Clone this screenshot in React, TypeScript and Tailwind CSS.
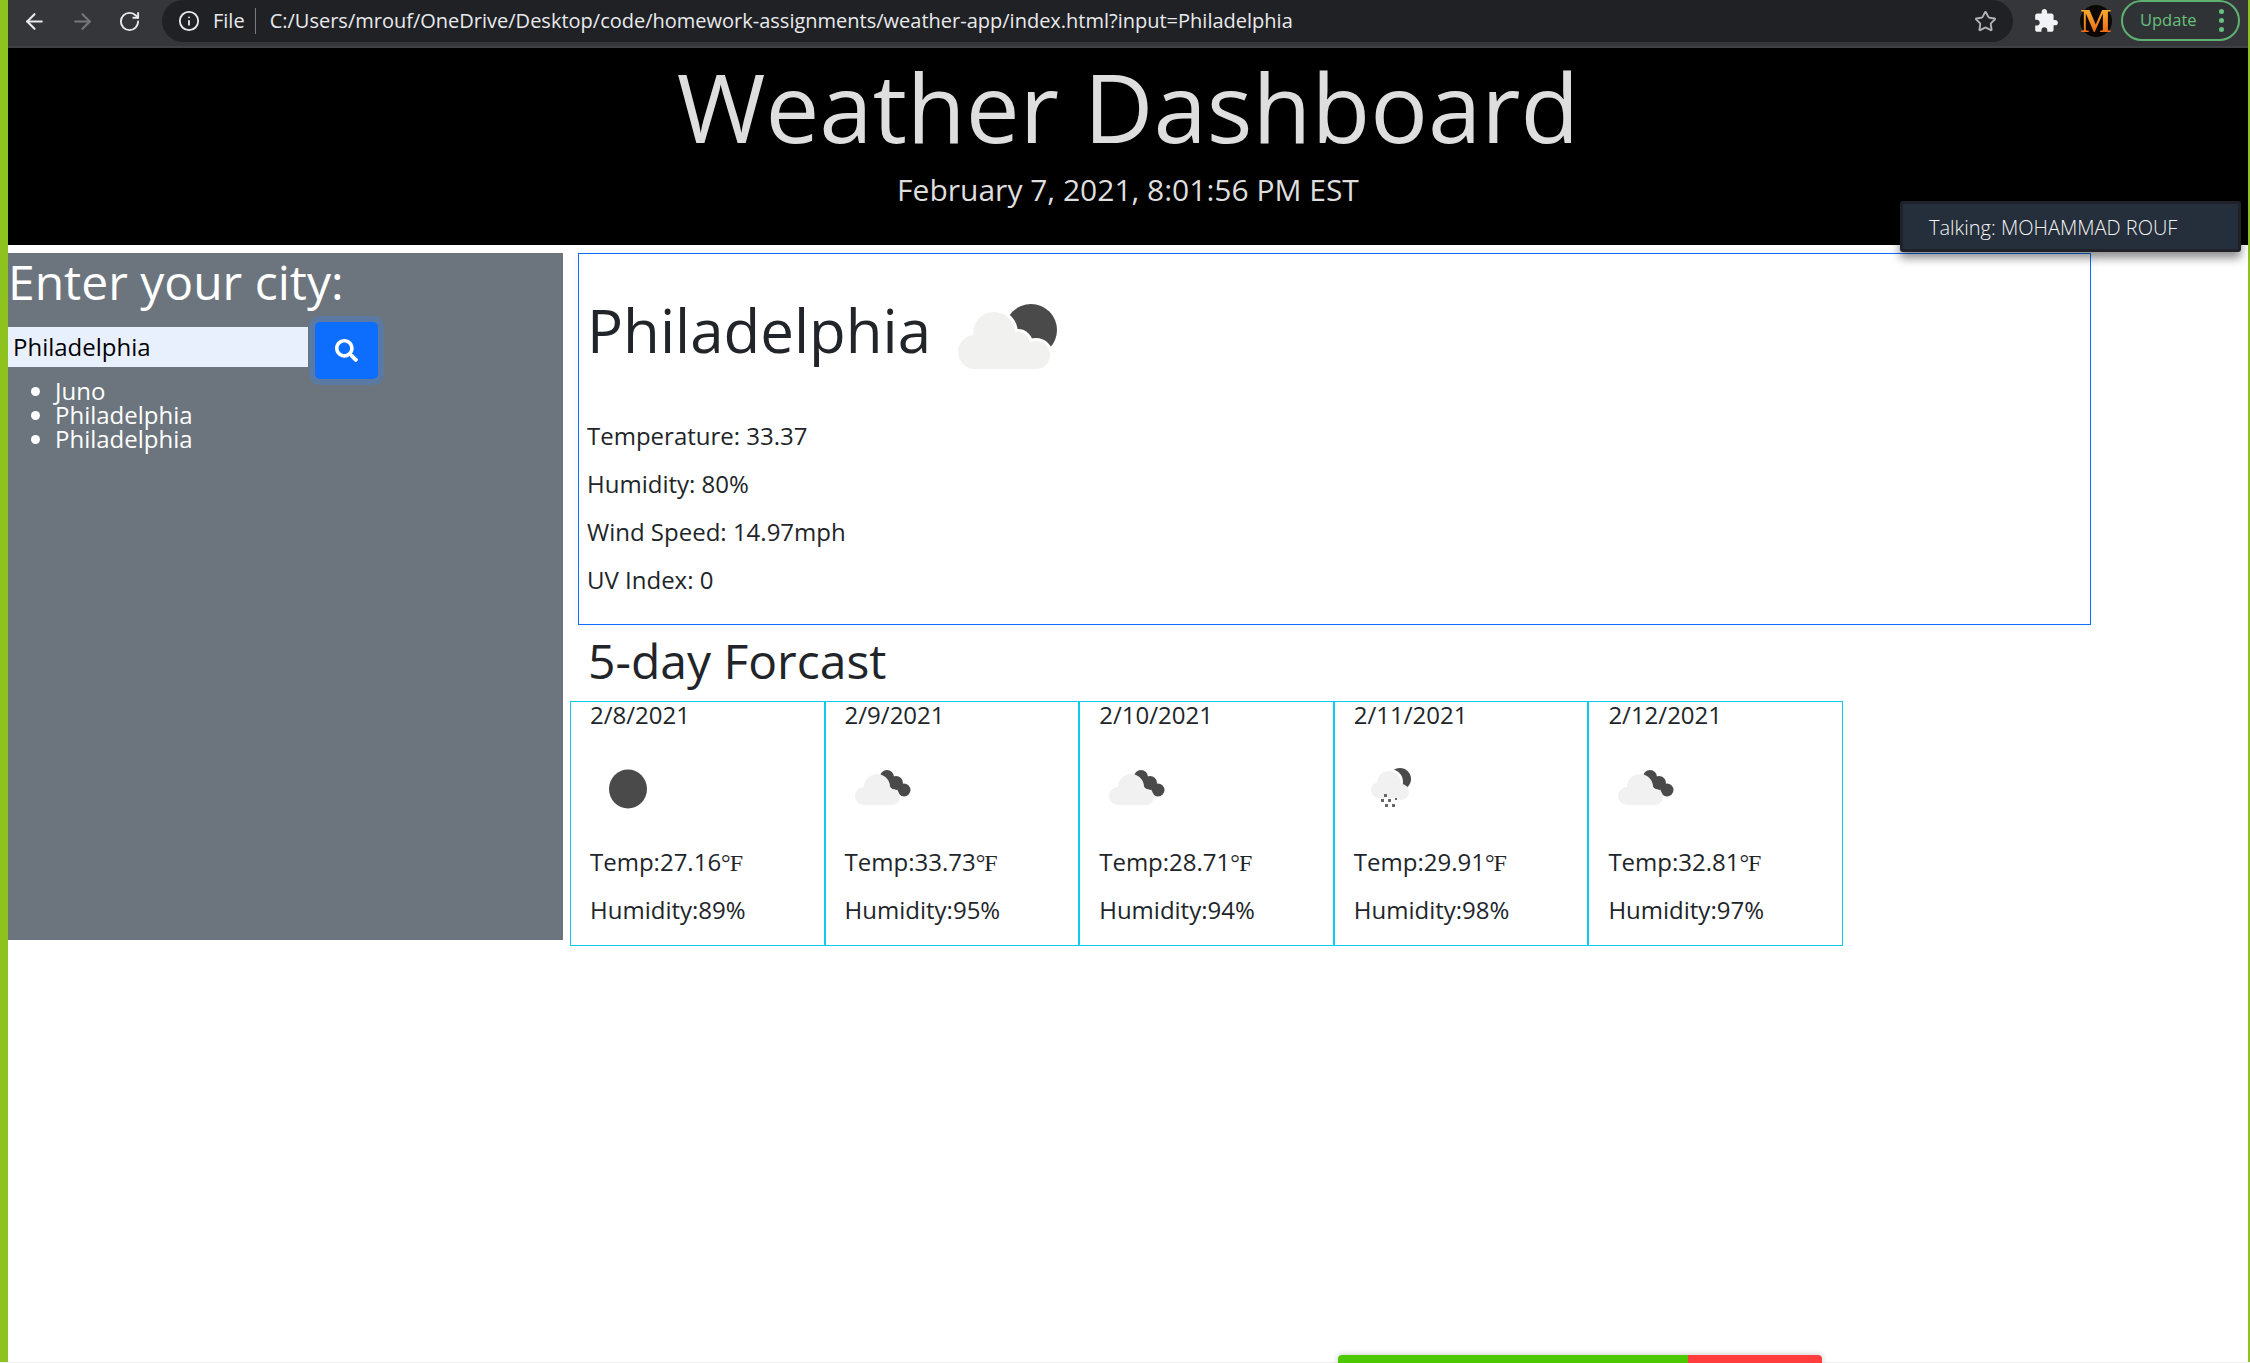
import React from "react";
import { FaSearch } from "react-icons/fa";
import { ArrowLeft, ArrowRight, RotateCw, Info, Star } from "lucide-react";

const Moon = () => (
  <svg width="101" height="66" viewBox="0 0 101 66" className="block">
    <circle cx="73" cy="27" r="26" fill="#4a4a4a" />
    <g fill="#ffffff">
      <circle cx="36" cy="30" r="24" />
      <circle cx="60" cy="41" r="15" />
      <circle cx="78" cy="52" r="17" />
    </g>
    <g fill="#f1f1f0">
      <circle cx="17" cy="49" r="17" />
      <circle cx="36" cy="30" r="21" />
      <circle cx="60" cy="41" r="12" />
      <circle cx="78" cy="52" r="14" />
      <rect x="17" y="44" width="61" height="22" />
    </g>
  </svg>
);

const Sun = () => (
  <svg width="40" height="40" viewBox="0 0 40 40" className="block">
    <ellipse cx="20" cy="20" rx="19" ry="19.5" fill="#4a4a4a" />
  </svg>
);

const Broken = () => (
  <svg width="56" height="36" viewBox="0 0 56 36" className="block">
    <g fill="#4a4a4a">
      <circle cx="32" cy="7" r="7" />
      <circle cx="41" cy="13" r="7" />
      <circle cx="49" cy="20" r="6.5" />
    </g>
    <g fill="#f1f1f1">
      <circle cx="9" cy="26" r="9" />
      <circle cx="22" cy="17" r="13" />
      <circle cx="37" cy="27" r="8" />
      <rect x="9" y="22" width="28" height="13" />
    </g>
  </svg>
);

const Rain = () => (
  <svg width="44" height="42" viewBox="0 0 44 42" className="block">
    <circle cx="29" cy="11" r="11" fill="#4a4a4a" />
    <circle cx="19" cy="14" r="13" fill="#fff" />
    <g fill="#f1f1f1">
      <circle cx="18" cy="15" r="12" />
      <circle cx="8" cy="22" r="8" />
      <circle cx="30" cy="24" r="8" />
      <rect x="8" y="20" width="22" height="10" />
    </g>
    <g fill="#666">
      <rect x="13" y="26" width="3" height="3" />
      <rect x="10" y="31" width="3" height="3" />
      <rect x="17" y="31" width="3" height="3" />
      <rect x="24" y="30" width="2" height="2" />
      <rect x="14" y="36" width="3" height="3" />
      <rect x="21" y="36" width="3" height="3" />
    </g>
  </svg>
);

const Puzzle = () => (
  <svg width="26" height="26" viewBox="0 0 24 24" className="block" fill="#f1f3f4">
    <path d="M20.5 11H19V7c0-1.1-.9-2-2-2h-4V3.5C13 2.12 11.88 1 10.5 1S8 2.12 8 3.5V5H4c-1.1 0-1.99.9-1.99 2v3.8H3.5c1.49 0 2.7 1.21 2.7 2.7s-1.21 2.7-2.7 2.7H2V20c0 1.1.9 2 2 2h3.8v-1.5c0-1.49 1.21-2.7 2.7-2.7 1.49 0 2.7 1.21 2.7 2.7V22H17c1.1 0 2-.9 2-2v-4h1.5c1.38 0 2.5-1.12 2.5-2.5S21.88 11 20.5 11z" />
  </svg>
);

const days = [
  { d: "2/8/2021", t: "27.16", h: "89%", icon: <Sun />, box: "pl-[37px] pt-[40px]" },
  { d: "2/9/2021", t: "33.73", h: "95%", icon: <Broken />, box: "pl-[29px] pt-[41px]" },
  { d: "2/10/2021", t: "28.71", h: "94%", icon: <Broken />, box: "pl-[29px] pt-[41px]" },
  { d: "2/11/2021", t: "29.91", h: "98%", icon: <Rain />, box: "pl-[36px] pt-[39px]" },
  { d: "2/12/2021", t: "32.81", h: "97%", icon: <Broken />, box: "pl-[29px] pt-[41px]" },
];

export default function App() {
  return (
    <div className="relative flex h-[1363px] w-[2250px] overflow-hidden bg-white font-['Open_Sans',sans-serif] text-[24px] leading-[24px] text-[#212529]">
      <div className="w-[8px] shrink-0 bg-[#8dc21f]" />
      <div className="flex min-w-0 flex-1 flex-col">
        {/* browser toolbar */}
        <div className="flex h-[48px] shrink-0 items-start border-b-2 border-b-[#3f4044] bg-[#35363a]">
          <div className="flex h-[42px] w-[154px] items-center gap-[23px] pl-[14px]">
            <ArrowLeft size={25} color="#e8eaed" strokeWidth={2} />
            <ArrowRight size={25} color="#75777a" strokeWidth={2} />
            <RotateCw size={23} color="#e8eaed" strokeWidth={2} />
          </div>
          <div className="flex h-[42px] w-[1851px] items-center rounded-full bg-[#202124] pl-[16px] pr-[16px] text-[20px] leading-none text-[#e8eaed]">
            <Info size={22} color="#e8eaed" />
            <span className="ml-[13px]">File</span>
            <span className="ml-[10px] mr-[14px] h-[26px] w-px bg-[#7a7b7e]" />
            <span className="whitespace-nowrap">C:/Users/mrouf/OneDrive/Desktop/code/homework-assignments/weather-app/index.html?input=Philadelphia</span>
            <Star size={23} color="#b0b2b5" className="ml-auto" />
          </div>
          <div className="flex h-[42px] items-center pl-[20px]">
            <Puzzle />
            <div className="ml-[21px] flex h-[32px] w-[32px] items-center justify-center rounded-full bg-[#0b0705] font-['Liberation_Serif',serif] text-[33px] font-bold leading-none">
              <span className="bg-gradient-to-b from-[#f7b733] to-[#e8590c] bg-clip-text text-transparent">M</span>
            </div>
          </div>
          <div className="ml-[9px] flex h-[41px] w-[119px] items-center rounded-full border-2 border-[#5fb172] bg-[#2f3336] pl-[17px] text-[16.5px] leading-none text-[#68c07c]">
            Update
            <span className="ml-[22px] flex flex-col gap-[4px]">
              <span className="h-[5px] w-[5px] rounded-full bg-[#68c07c]" />
              <span className="h-[5px] w-[5px] rounded-full bg-[#68c07c]" />
              <span className="h-[5px] w-[5px] rounded-full bg-[#68c07c]" />
            </span>
          </div>
        </div>

        {/* header */}
        <header className="flex h-[197px] shrink-0 flex-col items-center bg-black text-[#dedede]">
          <h1 className="mt-[8px] text-[96px] font-normal leading-[100px]">Weather Dashboard</h1>
          <p className="mt-[16px] text-[30px] leading-[36px]">February 7, 2021, 8:01:56 PM EST</p>
        </header>

        <div className="mt-[8px] flex items-start">
          {/* sidebar */}
          <aside className="h-[687px] w-[555px] shrink-0 bg-[#6c757d] text-white">
            <h2 className="pt-[3px] text-[48px] leading-[52px]">Enter your city:</h2>
            <div className="mt-[14px] flex items-start">
              <input
                readOnly
                value="Philadelphia"
                className="mt-[5px] h-[40px] w-[300px] bg-[#e8f0fe] pb-[2px] pl-[5px] text-[24px] text-black outline-none"
              />
              <button className="ml-[7px] flex h-[57px] w-[63px] items-center justify-center rounded-[5px] bg-[#0d6efd] shadow-[0_0_0_6px_rgba(49,132,253,0.3)]">
                <FaSearch size={23} color="#fff" />
              </button>
            </div>
            <ul className="ml-[47px] mt-0 list-disc text-[24px] leading-[24px]">
              <li>Juno</li>
              <li>Philadelphia</li>
              <li>Philadelphia</li>
            </ul>
          </aside>

          {/* main */}
          <main className="min-w-0 flex-1">
            <section className="ml-[15px] h-[372px] w-[1513px] border border-[#0d6efd] pl-[8px] shadow-[0_0_8px_rgba(13,110,253,0.07)]">
              <div className="flex h-[152px] items-center">
                <h1 className="text-[60px] font-normal leading-[72px]">Philadelphia</h1>
                <div className="ml-[27px] mt-[11px]"><Moon /></div>
              </div>
              <p className="mt-[18px] mb-[24px]">Temperature: 33.37</p>
              <p className="mb-[24px]">Humidity: 80%</p>
              <p className="mb-[24px]">Wind Speed: 14.97mph</p>
              <p>UV Index: 0</p>
            </section>
            <h2 className="mb-[4px] ml-[25px] text-[48px] leading-[72px]">5-day Forcast</h2>
            <div className="ml-[7px] flex">
              {days.map((x) => (
                <div
                  key={x.d}
                  className="h-[245px] w-[254.6px] shrink-0 border border-[#0dcaf0] pl-[19px]"
                >
                  <div className="h-[27px] leading-[26px]">{x.d}</div>
                  <div className={"ml-[-19px] h-[121px] " + x.box}>{x.icon}</div>
                  <p className="mb-[23px]">
                    Temp:{x.t}
                    <span className="font-['Liberation_Serif',serif] tracking-[-1px]">°F</span>
                  </p>
                  <p>Humidity:{x.h}</p>
                </div>
              ))}
            </div>
          </main>
        </div>
      </div>
      <div className="w-[2px] shrink-0 bg-[#8dc21f]" />

      {/* floating overlays */}
      <div className="absolute left-[1900px] top-[201px] flex h-[51px] w-[341px] items-center rounded-[3px] border-[3px] border-[#1f2329] bg-[#252f3b] pl-[26px] pt-[2px] text-[20px] font-light leading-none text-[#f2f2f2] shadow-[0_6px_10px_rgba(0,0,0,0.45)]">
        Talking: MOHAMMAD ROUF
      </div>
      <div className="absolute bottom-0 left-0 h-px w-full bg-[#eeeeee]" />
      <div className="absolute bottom-0 left-[1338px] flex h-[8px] w-[484px] overflow-hidden rounded-t-[4px] shadow-[0_0_6px_rgba(0,0,0,0.25)]">
        <div className="w-[350px] bg-[#4bc800]" />
        <div className="flex-1 bg-[#ff3d3d]" />
      </div>
    </div>
  );
}
